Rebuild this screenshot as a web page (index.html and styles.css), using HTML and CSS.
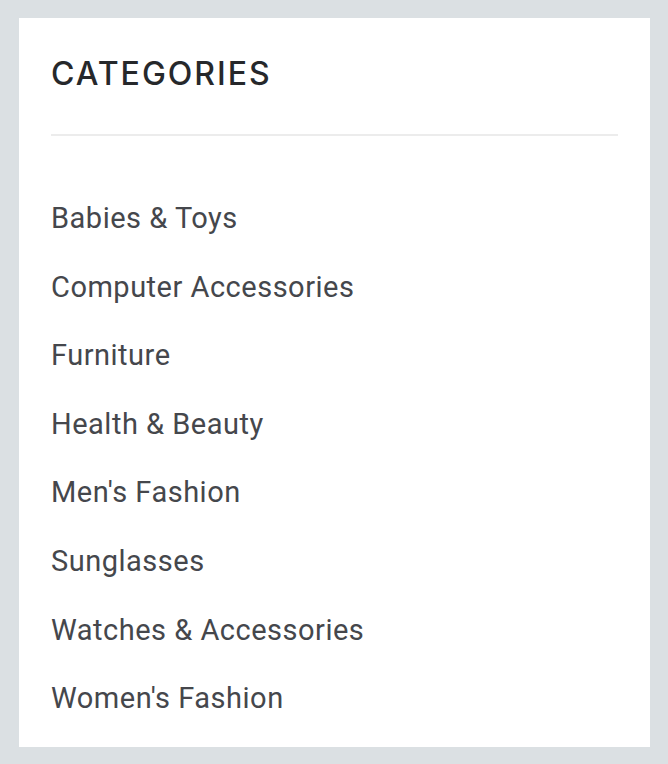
FILE: index.html
```html
<!DOCTYPE html>
<html lang="en">
<head>
  <meta charset="UTF-8" />
  <meta name="viewport" content="width=device-width, initial-scale=1.0"/>
  <title>Categories</title>
  <link rel="stylesheet" href="styles.css">
</head>
<body>

  <div class="widget">
    <h3 class="widget-title">CATEGORIES</h3>
    <ul class="category-list">
      <li><a href="#">Babies &amp; Toys</a></li>
      <li><a href="#">Computer Accessories</a></li>
      <li><a href="#">Furniture</a></li>
      <li><a href="#">Health &amp; Beauty</a></li>
      <li><a href="#">Men's Fashion</a></li>
      <li><a href="#">Sunglasses</a></li>
      <li><a href="#">Watches &amp; Accessories</a></li>
      <li><a href="#">Women's Fashion</a></li>
    </ul>
  </div>

</body>
</html>
```

FILE: styles.css
```css
* {
  box-sizing: border-box;
  margin: 0;
  padding: 0;
}

body {
  font-family: Roboto, 'Liberation Sans', sans-serif;
  background: #dbe0e3;
  padding: 18px 18px 17px 19px;
}

.widget {
  background: #ffffff;
  padding: 34px 32px 14px 32px;
}

.widget-title {
  font-family: Inter, 'Liberation Sans', sans-serif;
  font-size: 32px;
  font-weight: 500;
  color: #26282b;
  letter-spacing: 2px;
  line-height: 44px;
  padding-bottom: 38px;
  border-bottom: 2px solid #ececec;
}

.category-list {
  list-style: none;
  padding-top: 48px;
}

.category-list li {
  height: 68.6px;
  line-height: 68.6px;
  font-size: 29px;
  letter-spacing: 0.5px;
}

.category-list a {
  color: #45474c;
  text-decoration: none;
}
```
